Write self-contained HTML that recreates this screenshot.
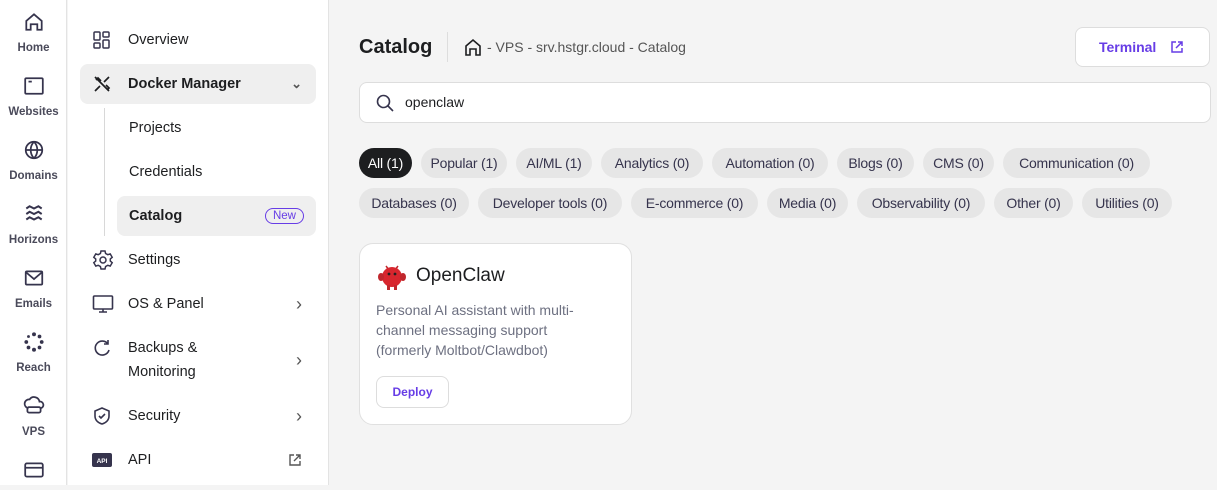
<!DOCTYPE html>
<html><head><meta charset="utf-8"><style>
*{box-sizing:border-box;margin:0;padding:0}
body{width:1217px;height:485px;overflow:hidden;font-family:"Liberation Sans",sans-serif;background:#f4f4f4;position:relative;color:#1d1e20}
.rail{position:absolute;left:0;top:0;width:67px;height:485px;background:#fff;border-right:1px solid #e3e3e3}
.ri{position:absolute;left:0;width:67px;text-align:center;font-size:11.5px;color:#4a4a5a;font-weight:bold}
.ri svg{display:block;margin:0 auto 9px}
.side{position:absolute;left:68px;top:0;width:261px;height:485px;background:#fff;border-right:1px solid #e3e3e3}
.it{position:absolute;left:12px;width:236px;height:40px;font-size:14.5px;display:flex;align-items:center;color:#1d1e20}
.it svg{position:absolute;left:12px}
.it span{position:absolute;left:48px}
.it span.chev{left:auto;right:14px;font-size:18px;color:#555}
.pill{position:absolute;height:30px;border-radius:15px;background:#e6e6e6;font-size:14px;line-height:30px;text-align:center;color:#36344d;letter-spacing:-0.2px}
</style></head><body>
<div class="rail">
 <div class="ri" style="top:11px"><svg width="22" height="22" viewBox="0 0 20 20" fill="none" stroke="#36344d" stroke-width="1.6"><path d="M3 9l7-6 7 6v8h-4v-5H7v5H3z"/></svg>Home</div>
 <div class="ri" style="top:75px"><svg width="22" height="22" viewBox="0 0 20 20" fill="none" stroke="#36344d" stroke-width="1.6"><rect x="2" y="3" width="16" height="14" rx="1"/><path d="M5 6h3"/></svg>Websites</div>
 <div class="ri" style="top:139px"><svg width="22" height="22" viewBox="0 0 20 20" fill="none" stroke="#36344d" stroke-width="1.6"><circle cx="10" cy="10" r="7.5"/><path d="M2.5 10h15M10 2.5c-4 4-4 11 0 15M10 2.5c4 4 4 11 0 15"/></svg>Domains</div>
 <div class="ri" style="top:203px"><svg width="22" height="22" viewBox="0 0 20 20" fill="none" stroke="#36344d" stroke-width="1.8"><path d="M3 5l3-2 4 2 4-2 3 2M3 10l3-2 4 2 4-2 3 2M3 15l3-2 4 2 4-2 3 2"/></svg>Horizons</div>
 <div class="ri" style="top:267px"><svg width="22" height="22" viewBox="0 0 20 20" fill="none" stroke="#36344d" stroke-width="1.6"><rect x="2.5" y="4" width="15" height="12" rx="1"/><path d="M3 5l7 6 7-6"/></svg>Emails</div>
 <div class="ri" style="top:331px"><svg width="22" height="22" viewBox="0 0 20 20" fill="#36344d"><circle cx="10" cy="3" r="1.8"/><circle cx="15" cy="5" r="1.7"/><circle cx="17" cy="10" r="1.7"/><circle cx="15" cy="15" r="1.7"/><circle cx="10" cy="17" r="1.8"/><circle cx="5" cy="15" r="1.7"/><circle cx="3" cy="10" r="1.7"/><circle cx="5" cy="5" r="1.3"/></svg>Reach</div>
 <div class="ri" style="top:395px"><svg width="22" height="22" viewBox="0 0 20 20" fill="none" stroke="#36344d" stroke-width="1.6"><path d="M5 12a4 4 0 0 1 1-8 5 5 0 0 1 9 2 3 3 0 0 1 1 6"/><rect x="4" y="11" width="12" height="5" rx="1.5"/></svg>VPS</div>
 <div class="ri" style="top:459px"><svg width="22" height="22" viewBox="0 0 20 20" fill="none" stroke="#36344d" stroke-width="1.6"><rect x="2" y="4" width="16" height="12" rx="1.5"/><path d="M2 8h16"/></svg></div>
</div>
<div class="side">
 <div class="it" style="top:20px"><svg width="20" height="20" viewBox="0 0 20 20" fill="none" stroke="#36344d" stroke-width="1.5"><rect x="2" y="2" width="6" height="8" rx="1"/><rect x="11" y="2" width="6" height="5" rx="1"/><rect x="2" y="13" width="6" height="5" rx="1"/><rect x="11" y="10" width="6" height="8" rx="1"/></svg><span>Overview</span></div>
 <div class="it" style="top:64px;background:#efefef;border-radius:8px;font-weight:bold"><svg width="20" height="20" viewBox="0 0 20 20" fill="none" stroke="#1d1e20" stroke-width="1.7"><path d="M3 3l14 14M3 17l5-5M12 8l5-5M4 6l2-2 3 3M14 11l3 3-2 2"/></svg><span>Docker Manager</span><span class="chev" style="font-size:13px">&#8964;</span></div>
 <div style="position:absolute;left:36px;top:108px;width:1px;height:128px;background:#d8d8d8"></div>
 <div class="it" style="top:108px"><span style="left:49px">Projects</span></div>
 <div class="it" style="top:152px"><span style="left:49px">Credentials</span></div>
 <div class="it" style="top:196px;left:49px;width:199px;background:#efefef;border-radius:8px;font-weight:bold"><span style="left:12px">Catalog</span><span style="position:absolute;right:12px;left:auto;border:1.5px solid #673de6;color:#673de6;border-radius:10px;font-size:11.5px;font-weight:normal;padding:1px 7px">New</span></div>
 <div class="it" style="top:240px"><svg width="22" height="22" viewBox="0 0 22 22" fill="none" stroke="#36344d" stroke-width="1.5"><circle cx="11" cy="11" r="3"/><path d="M9 2h4l.6 2.5 2.2 1.2 2.4-.8 2 3.4-1.9 1.7v2l1.9 1.7-2 3.4-2.4-.8-2.2 1.2L13 20H9l-.6-2.5-2.2-1.2-2.4.8-2-3.4 1.9-1.7v-2L1.8 8.3l2-3.4 2.4.8 2.2-1.2z"/></svg><span>Settings</span></div>
 <div class="it" style="top:284px"><svg width="22" height="20" viewBox="0 0 22 20" fill="none" stroke="#36344d" stroke-width="1.6"><rect x="1.5" y="2" width="19" height="13" rx="1"/><path d="M7 18h8M11 15v3"/></svg><span>OS &amp; Panel</span><span class="chev">›</span></div>
 <div class="it" style="top:328px;height:64px"><svg width="20" height="20" viewBox="0 0 20 20" fill="none" stroke="#36344d" stroke-width="1.6" style="top:10px"><path d="M16 6a7 7 0 1 0 1 6M16 2v4h-4"/></svg><span style="top:8px;line-height:24px">Backups &amp;<br>Monitoring</span><span class="chev">›</span></div>
 <div class="it" style="top:396px"><svg width="20" height="20" viewBox="0 0 20 20" fill="none" stroke="#36344d" stroke-width="1.6"><path d="M10 2l7 3v5c0 4-3 7-7 8-4-1-7-4-7-8V5z"/><path d="M7 10l2 2 4-4"/></svg><span>Security</span><span class="chev">›</span></div>
 <div class="it" style="top:440px"><svg width="20" height="14" viewBox="0 0 20 14"><rect width="20" height="14" rx="2" fill="#36344d"/><text x="10" y="10" font-size="6.5" font-weight="bold" fill="#fff" text-anchor="middle" font-family="Liberation Sans">API</text></svg><span>API</span><svg width="14" height="14" viewBox="0 0 14 14" fill="none" stroke="#555" stroke-width="1.4" style="left:auto;right:14px"><path d="M6 2H2v10h10V8M8 2h4v4M12 2L6 8"/></svg></div>
</div>
<div style="position:absolute;left:359px;top:36px;font-size:20px;font-weight:bold">Catalog</div>
<div style="position:absolute;left:447px;top:32px;width:1px;height:30px;background:#ddd"></div>
<svg style="position:absolute;left:463px;top:37px" width="20" height="20" viewBox="0 0 20 20" fill="none" stroke="#1d1e20" stroke-width="1.6"><path d="M3 9l7-6 7 6v9h-4v-6H7v6H3z"/></svg>
<div style="position:absolute;left:487px;top:39px;font-size:14px;color:#555">- VPS - srv.hstgr.cloud - Catalog</div>
<div style="position:absolute;left:1075px;top:27px;width:135px;height:40px;background:#fff;border:1px solid #ddd;border-radius:8px;color:#673de6;font-weight:bold;font-size:14px;line-height:38px;padding-left:23px">Terminal <svg style="position:absolute;left:94px;top:12px" width="14" height="14" viewBox="0 0 14 14" fill="none" stroke="#673de6" stroke-width="1.5"><path d="M6 2H2v10h10V8M8 2h4v4M12 2L6 8"/></svg></div>
<div style="position:absolute;left:359px;top:82px;width:852px;height:41px;background:#fff;border:1px solid #ddd;border-radius:8px"></div>
<svg style="position:absolute;left:375px;top:93px" width="20" height="20" viewBox="0 0 20 20" fill="none" stroke="#36344d" stroke-width="1.6"><circle cx="8.5" cy="8.5" r="6"/><path d="M13 13l5 5"/></svg>
<div style="position:absolute;left:405px;top:94px;font-size:14px">openclaw</div>
<div class="pill" style="left:359px;top:148px;width:53px;background:#1d1e20;color:#fff">All (1)</div>
<div class="pill" style="left:421px;top:148px;width:86px">Popular (1)</div>
<div class="pill" style="left:516px;top:148px;width:76px">AI/ML (1)</div>
<div class="pill" style="left:601px;top:148px;width:102px">Analytics (0)</div>
<div class="pill" style="left:712px;top:148px;width:116px">Automation (0)</div>
<div class="pill" style="left:837px;top:148px;width:77px">Blogs (0)</div>
<div class="pill" style="left:923px;top:148px;width:71px">CMS (0)</div>
<div class="pill" style="left:1003px;top:148px;width:147px">Communication (0)</div>
<div class="pill" style="left:359px;top:188px;width:110px">Databases (0)</div>
<div class="pill" style="left:478px;top:188px;width:144px">Developer tools (0)</div>
<div class="pill" style="left:631px;top:188px;width:127px">E-commerce (0)</div>
<div class="pill" style="left:767px;top:188px;width:81px">Media (0)</div>
<div class="pill" style="left:857px;top:188px;width:128px">Observability (0)</div>
<div class="pill" style="left:994px;top:188px;width:79px">Other (0)</div>
<div class="pill" style="left:1082px;top:188px;width:90px">Utilities (0)</div>
<div style="position:absolute;left:359px;top:243px;width:273px;height:182px;background:#fff;border:1px solid #e0e0e0;border-radius:14px">
 <svg style="position:absolute;left:17px;top:18px" width="30" height="30" viewBox="0 0 30 30"><path d="M9 4l3 4M21 4l-3 4" stroke="#c0272d" stroke-width="1.5"/><ellipse cx="15" cy="15" rx="10" ry="10" fill="#d8262e"/><ellipse cx="4" cy="15" rx="3" ry="4" fill="#c0272d"/><ellipse cx="26" cy="15" rx="3" ry="4" fill="#c0272d"/><rect x="10" y="23" width="3" height="5" fill="#c0272d"/><rect x="17" y="23" width="3" height="5" fill="#c0272d"/><circle cx="12" cy="12" r="1.4" fill="#222"/><circle cx="18" cy="12" r="1.4" fill="#222"/></svg>
 <div style="position:absolute;left:56px;top:21px;font-size:19px;font-weight:500">OpenClaw</div>
 <div style="position:absolute;left:16px;top:56px;width:218px;font-size:14px;line-height:20px;color:#6d7081">Personal AI assistant with multi-channel messaging support (formerly Moltbot/Clawdbot)</div>
 <div style="position:absolute;left:16px;top:132px;width:73px;height:32px;border:1px solid #ddd;border-radius:8px;color:#673de6;font-weight:bold;font-size:12px;line-height:30px;text-align:center">Deploy</div>
</div>
</body></html>
